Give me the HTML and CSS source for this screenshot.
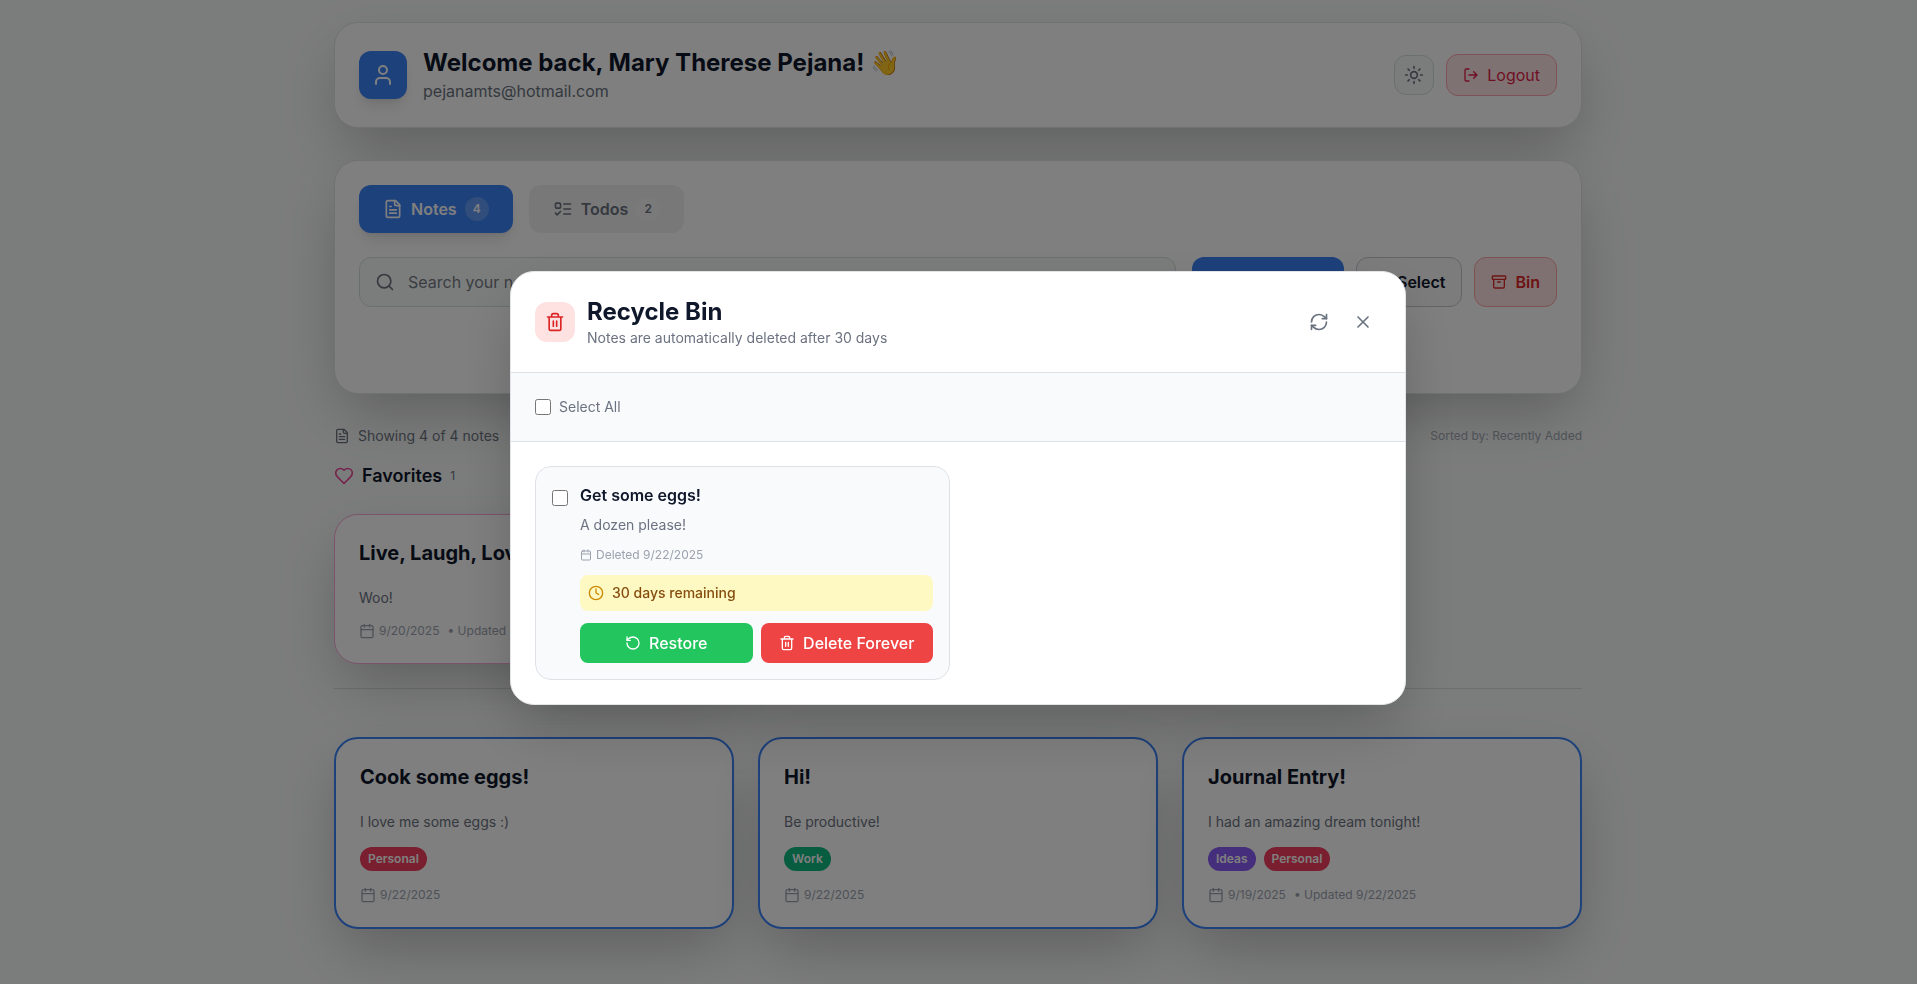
FILE: index.html
```html
<!DOCTYPE html>
<html lang="en">
<head>
<meta charset="utf-8">
<meta name="viewport" content="width=device-width, initial-scale=1">
<title>Notes</title>
<link rel="stylesheet" href="styles.css">
</head>
<body>
<svg class="sprite" aria-hidden="true">
  <symbol id="user" viewBox="0 0 24 24"><path d="M19 21v-2a4 4 0 0 0-4-4H9a4 4 0 0 0-4 4v2"/><circle cx="12" cy="7" r="4"/></symbol>
  <symbol id="sun" viewBox="0 0 24 24"><circle cx="12" cy="12" r="4"/><path d="M12 2v2M12 20v2M4.93 4.93l1.41 1.41M17.66 17.66l1.41 1.41M2 12h2M20 12h2M6.34 17.66l-1.41 1.41M19.07 4.93l-1.41 1.41"/></symbol>
  <symbol id="logout" viewBox="0 0 24 24"><path d="M9 21H5a2 2 0 0 1-2-2V5a2 2 0 0 1 2-2h4M16 17l5-5-5-5M21 12H9"/></symbol>
  <symbol id="file" viewBox="0 0 24 24"><path d="M15 2H6a2 2 0 0 0-2 2v16a2 2 0 0 0 2 2h12a2 2 0 0 0 2-2V7Z"/><path d="M14 2v4a2 2 0 0 0 2 2h4M10 9H8M16 13H8M16 17H8"/></symbol>
  <symbol id="todo" viewBox="0 0 24 24"><rect x="3" y="5" width="6" height="6" rx="1"/><path d="m3 17 2 2 4-4M13 6h8M13 12h8M13 18h8"/></symbol>
  <symbol id="search" viewBox="0 0 24 24"><circle cx="11" cy="11" r="8"/><path d="m21 21-4.3-4.3"/></symbol>
  <symbol id="plus" viewBox="0 0 24 24"><path d="M5 12h14M12 5v14"/></symbol>
  <symbol id="check" viewBox="0 0 24 24"><rect x="3" y="3" width="18" height="18" rx="2"/><path d="m9 12 2 2 4-4"/></symbol>
  <symbol id="archive" viewBox="0 0 24 24"><rect x="2" y="3" width="20" height="5" rx="1"/><path d="M4 8v11a2 2 0 0 0 2 2h12a2 2 0 0 0 2-2V8M10 12h4"/></symbol>
  <symbol id="heart" viewBox="0 0 24 24"><path d="M19 14c1.49-1.46 3-3.21 3-5.5A5.5 5.5 0 0 0 16.5 3c-1.76 0-3 .5-4.5 2-1.5-1.5-2.74-2-4.5-2A5.5 5.5 0 0 0 2 8.5c0 2.3 1.5 4.05 3 5.5l7 7Z"/></symbol>
  <symbol id="calendar" viewBox="0 0 24 24"><path d="M8 2v4M16 2v4M3 10h18"/><rect x="3" y="4" width="18" height="18" rx="2"/></symbol>
  <symbol id="trash" viewBox="0 0 24 24"><path d="M3 6h18M19 6v14c0 1-1 2-2 2H7c-1 0-2-1-2-2V6M8 6V4c0-1 1-2 2-2h4c1 0 2 1 2 2v2M10 11v6M14 11v6"/></symbol>
  <symbol id="refresh" viewBox="0 0 24 24"><path d="M3 12a9 9 0 0 1 9-9 9.75 9.75 0 0 1 6.74 2.74L21 8"/><path d="M21 3v5h-5M21 12a9 9 0 0 1-9 9 9.75 9.75 0 0 1-6.74-2.74L3 16"/><path d="M8 16H3v5"/></symbol>
  <symbol id="close" viewBox="0 0 24 24"><path d="M18 6 6 18M6 6l12 12"/></symbol>
  <symbol id="clock" viewBox="0 0 24 24"><circle cx="12" cy="12" r="10"/><path d="M12 6v6l4 2"/></symbol>
  <symbol id="restore" viewBox="0 0 24 24"><path d="M3 12a9 9 0 1 0 9-9 9.75 9.75 0 0 0-6.74 2.74L3 8"/><path d="M3 3v5h5"/></symbol>
</svg>

<div class="page">
  <header class="panel header">
    <div class="avatar"><svg class="icon icon-lg"><use href="#user"/></svg></div>
    <div class="greeting">
      <h1>Welcome back, Mary Therese Pejana! 👋</h1>
      <p>pejanamts@hotmail.com</p>
    </div>
    <button class="theme-button" type="button" aria-label="Toggle theme"><svg class="icon icon-md"><use href="#sun"/></svg></button>
    <button class="button logout-button" type="button"><svg class="icon"><use href="#logout"/></svg>Logout</button>
  </header>

  <section class="panel toolbar">
    <div class="tabs">
      <button class="tab tab-active" type="button"><svg class="icon icon-md"><use href="#file"/></svg>Notes<span class="count">4</span></button>
      <button class="tab" type="button"><svg class="icon icon-md"><use href="#todo"/></svg>Todos<span class="count">2</span></button>
    </div>
    <div class="actions">
      <label class="search">
        <svg class="icon icon-md"><use href="#search"/></svg>
        <input type="text" placeholder="Search your notes..." aria-label="Search your notes">
      </label>
      <div class="action-buttons">
        <button class="button new-button" type="button"><svg class="icon icon-md"><use href="#plus"/></svg>New Note</button>
        <button class="button select-button" type="button"><svg class="icon"><use href="#check"/></svg>Select</button>
        <button class="button bin-button" type="button"><svg class="icon"><use href="#archive"/></svg>Bin</button>
      </div>
    </div>
  </section>

  <div class="stats">
    <span class="showing"><svg class="icon"><use href="#file"/></svg>Showing 4 of 4 notes</span>
    <span class="sorted">Sorted by: Recently Added</span>
  </div>

  <section class="favorites">
    <h2 class="section-title"><svg class="icon icon-md"><use href="#heart"/></svg>Favorites<span>1</span></h2>
    <div class="grid">
      <article class="note note-favorite">
        <h3>Live, Laugh, Love</h3>
        <p>Woo!</p>
        <div class="meta"><svg class="icon"><use href="#calendar"/></svg><span>9/20/2025</span><span class="updated">• Updated 9/22/2025</span></div>
      </article>
    </div>
  </section>

  <section class="grid">
    <article class="note">
      <h3>Cook some eggs!</h3>
      <p>I love me some eggs :)</p>
      <div class="tags"><span class="tag tag-personal">Personal</span></div>
      <div class="meta"><svg class="icon"><use href="#calendar"/></svg><span>9/22/2025</span></div>
    </article>
    <article class="note">
      <h3>Hi!</h3>
      <p>Be productive!</p>
      <div class="tags"><span class="tag tag-work">Work</span></div>
      <div class="meta"><svg class="icon"><use href="#calendar"/></svg><span>9/22/2025</span></div>
    </article>
    <article class="note">
      <h3>Journal Entry!</h3>
      <p>I had an amazing dream tonight!</p>
      <div class="tags"><span class="tag tag-ideas">Ideas</span><span class="tag tag-personal">Personal</span></div>
      <div class="meta"><svg class="icon"><use href="#calendar"/></svg><span>9/19/2025</span><span class="updated">• Updated 9/22/2025</span></div>
    </article>
  </section>
</div>

<div class="overlay">
  <div class="modal" role="dialog" aria-modal="true" aria-labelledby="bin-title">
    <div class="modal-header">
      <div class="modal-badge"><svg class="icon icon-md"><use href="#trash"/></svg></div>
      <div class="modal-heading">
        <h2 id="bin-title">Recycle Bin</h2>
        <p>Notes are automatically deleted after 30 days</p>
      </div>
      <div class="modal-tools">
        <button type="button" aria-label="Refresh"><svg class="icon icon-md"><use href="#refresh"/></svg></button>
        <button type="button" aria-label="Close"><svg class="icon icon-md"><use href="#close"/></svg></button>
      </div>
    </div>
    <div class="select-bar">
      <input class="checkbox" type="checkbox" id="select-all">
      <label for="select-all">Select All</label>
    </div>
    <div class="modal-body">
      <article class="deleted">
        <input class="checkbox" type="checkbox" aria-label="Select Get some eggs!">
        <div class="deleted-content">
          <h3>Get some eggs!</h3>
          <p>A dozen please!</p>
          <div class="deleted-date"><svg class="icon icon-xs"><use href="#calendar"/></svg>Deleted 9/22/2025</div>
          <div class="remaining"><svg class="icon"><use href="#clock"/></svg>30 days remaining</div>
          <div class="deleted-actions">
            <button class="restore-button" type="button"><svg class="icon"><use href="#restore"/></svg>Restore</button>
            <button class="delete-button" type="button"><svg class="icon"><use href="#trash"/></svg>Delete Forever</button>
          </div>
        </div>
      </article>
    </div>
  </div>
</div>
</body>
</html>
```

FILE: styles.css
```css
*, *::before, *::after { box-sizing: border-box; }

body {
  margin: 0;
  padding-right: 1px;
  min-height: 100vh;
  overflow: hidden;
  background: #f7faf8;
  color: #0f172a;
  font-family: Inter, "Liberation Sans", "Noto Color Emoji", sans-serif;
  font-size: 16px;
  line-height: 24px;
}

h1, h2, h3, p { margin: 0; }

button, input { font: inherit; color: inherit; }

button {
  display: flex;
  align-items: center;
  justify-content: center;
  gap: 8px;
  padding: 0;
  border: 0;
  background: none;
  white-space: nowrap;
  cursor: pointer;
}

.sprite { position: absolute; width: 0; height: 0; }

.icon {
  flex: none;
  width: 16px;
  height: 16px;
  fill: none;
  stroke: currentColor;
  stroke-width: 2;
  stroke-linecap: round;
  stroke-linejoin: round;
}
.icon-xs { width: 12px; height: 12px; }
.icon-md { width: 20px; height: 20px; }
.icon-lg { width: 24px; height: 24px; }

.page {
  max-width: 1280px;
  margin: 0 auto;
  padding: 22px 16px 48px;
}

.panel {
  margin-bottom: 32px;
  padding: 24px;
  border: 1px solid #dfe5e2;
  border-radius: 24px;
  background: #fff;
  box-shadow: 0 25px 60px -10px rgba(0, 0, 0, 0.25);
}

/* Header */
.header { display: flex; align-items: center; }
.avatar {
  display: grid;
  place-items: center;
  width: 48px;
  height: 48px;
  margin-right: 16px;
  border-radius: 12px;
  background: #3b82f6;
  color: #fff;
  box-shadow: 0 10px 15px -3px rgba(0, 0, 0, 0.1), 0 4px 6px -4px rgba(0, 0, 0, 0.1);
}
.greeting { flex: 1; }
.greeting h1 { font-size: 24px; line-height: 32px; font-weight: 700; }
.greeting p { color: #6b7280; }
.theme-button {
  width: 40px;
  height: 40px;
  margin-right: 12px;
  border: 1px solid #d3e0da;
  border-radius: 12px;
  background: #f7faf8;
  color: #6b7280;
}
.button { padding: 8px 16px; border: 1px solid transparent; border-radius: 12px; }
.logout-button { border-color: #fda4af; background: #ffe4e6; color: #e11d48; }

/* Tabs and actions */
.toolbar { padding-bottom: 86px; }
.tabs { display: flex; gap: 16px; margin-bottom: 24px; }
.tab {
  padding: 12px 24px;
  border-radius: 12px;
  background: #f1f1f1;
  color: #6b7280;
  font-weight: 600;
}
.tab-active {
  background: #3b82f6;
  color: #fff;
  box-shadow: 0 10px 15px -3px rgba(0, 0, 0, 0.1), 0 4px 6px -4px rgba(0, 0, 0, 0.1);
}
.count {
  min-width: 24px;
  padding: 4px 8px;
  border-radius: 12px;
  background: #f4f5f5;
  font-size: 12px;
  line-height: 16px;
}
.tab-active .count { background: rgba(255, 255, 255, 0.2); }
.actions { display: flex; gap: 16px; }
.search { position: relative; flex: 1; }
.search .icon { position: absolute; left: 16px; top: 15px; color: #6b7280; }
.search input {
  display: block;
  width: 100%;
  padding: 12px 16px 12px 48px;
  border: 1px solid #d3e0da;
  border-radius: 12px;
  background: #f7faf8;
}
.search input::placeholder { color: #757b85; opacity: 1; }
.action-buttons { display: flex; gap: 12px; font-weight: 600; }
.action-buttons .button { padding: 12px 16px; }
.action-buttons .new-button { padding: 12px 23px; background: #3b82f6; color: #fff; }
.select-button { border-color: #c6c9ce; background: #f9f9f9; }
.bin-button { border-color: #fca5a5; background: #fee2e2; color: #dc2626; }

/* Note lists */
.stats { display: flex; justify-content: space-between; align-items: center; margin-bottom: 16px; }
.showing { display: flex; align-items: center; gap: 8px; color: #6b7280; font-size: 14px; line-height: 20px; }
.sorted { color: #9ca3af; font-size: 12px; line-height: 16px; }
.favorites { margin-bottom: 48px; padding-bottom: 24px; border-bottom: 1px solid #d9dedc; }
.section-title {
  display: flex;
  align-items: center;
  gap: 8px;
  margin-bottom: 24px;
  font-size: 18px;
  line-height: 28px;
  font-weight: 600;
}
.section-title .icon { color: #ec4899; }
.section-title span { color: #6b7280; font-size: 12px; font-weight: 400; }
.grid { display: grid; grid-template-columns: repeat(3, 1fr); gap: 24px; }
.note {
  padding: 24px;
  border: 2px solid #3b82f6;
  border-radius: 24px;
  background: #fff;
  box-shadow: 0 25px 60px -10px rgba(0, 0, 0, 0.25);
}
.note-favorite { border: 1px solid #f9a8d4; }
.note h3 { margin-bottom: 19px; font-size: 20px; line-height: 28px; font-weight: 700; }
.note p { margin-bottom: 14px; color: #6b7280; font-size: 14px; line-height: 23px; }
.tags { display: flex; gap: 8px; margin-bottom: 16px; }
.tag {
  padding: 4px 8px;
  border-radius: 12px;
  color: #fff;
  font-size: 12px;
  line-height: 16px;
  font-weight: 600;
}
.tag-personal { background: #f43f5e; }
.tag-work { background: #10b981; }
.tag-ideas { background: #8b5cf6; }
.meta { display: flex; align-items: center; gap: 4px; color: #9ca3af; font-size: 12px; line-height: 16px; }
.updated { margin-left: 4px; }

/* Recycle bin dialog */
.overlay {
  position: fixed;
  inset: 0;
  display: flex;
  align-items: center;
  justify-content: center;
  padding: 16px 17px 24px 16px;
  background: rgba(0, 0, 0, 0.5);
}
.modal {
  width: 100%;
  max-width: 896px;
  overflow: hidden;
  border: 1px solid #e2e4e8;
  border-radius: 24px;
  background: #fff;
  box-shadow: 0 25px 60px -10px rgba(0, 0, 0, 0.25);
}
.modal-header {
  display: flex;
  align-items: center;
  gap: 12px;
  padding: 24px;
  border-bottom: 1px solid #dee1e6;
}
.modal-badge {
  display: grid;
  place-items: center;
  width: 40px;
  height: 40px;
  border-radius: 12px;
  background: #fee2e2;
  color: #dc2626;
}
.modal-heading { flex: 1; }
.modal-heading h2 { font-size: 24px; line-height: 32px; font-weight: 700; }
.modal-heading p { color: #6b7280; font-size: 14px; line-height: 20px; }
.modal-tools { display: flex; gap: 8px; color: #6b7280; }
.modal-tools button { padding: 8px; border-radius: 8px; }
.select-bar {
  display: flex;
  align-items: center;
  gap: 8px;
  padding: 24px;
  border-bottom: 1px solid #dee1e6;
  background: #f8fafc;
  color: #6b7280;
  font-size: 14px;
  line-height: 20px;
}
.checkbox { flex: none; width: 16px; height: 16px; margin: 0; }
.modal-body {
  display: grid;
  grid-template-columns: 1fr 1fr;
  gap: 16px;
  padding: 24px;
}
.deleted {
  display: flex;
  gap: 12px;
  padding: 16px;
  border: 1px solid #dee1e6;
  border-radius: 16px;
  background: #f8fafc;
}
.deleted .checkbox { margin-top: 7px; }
.deleted-content { flex: 1; }
.deleted h3 { margin-bottom: 8px; font-size: 16px; font-weight: 600; }
.deleted p { margin-bottom: 12px; color: #6b7280; font-size: 14px; line-height: 20px; }
.deleted-date {
  display: flex;
  align-items: center;
  gap: 4px;
  margin-bottom: 12px;
  color: #9ca3af;
  font-size: 12px;
  line-height: 16px;
}
.remaining {
  display: flex;
  align-items: center;
  gap: 8px;
  margin-bottom: 12px;
  padding: 8px;
  border-radius: 8px;
  background: #fef9c3;
  color: #854d0e;
  font-size: 14px;
  line-height: 20px;
  font-weight: 500;
}
.remaining .icon { color: #ca8a04; }
.deleted-actions { display: grid; grid-template-columns: 1fr 1fr; gap: 8px; }
.deleted-actions button { padding: 8px; border-radius: 8px; color: #fff; font-weight: 500; }
.restore-button { background: #22c55e; }
.delete-button { background: #ef4444; }
```
